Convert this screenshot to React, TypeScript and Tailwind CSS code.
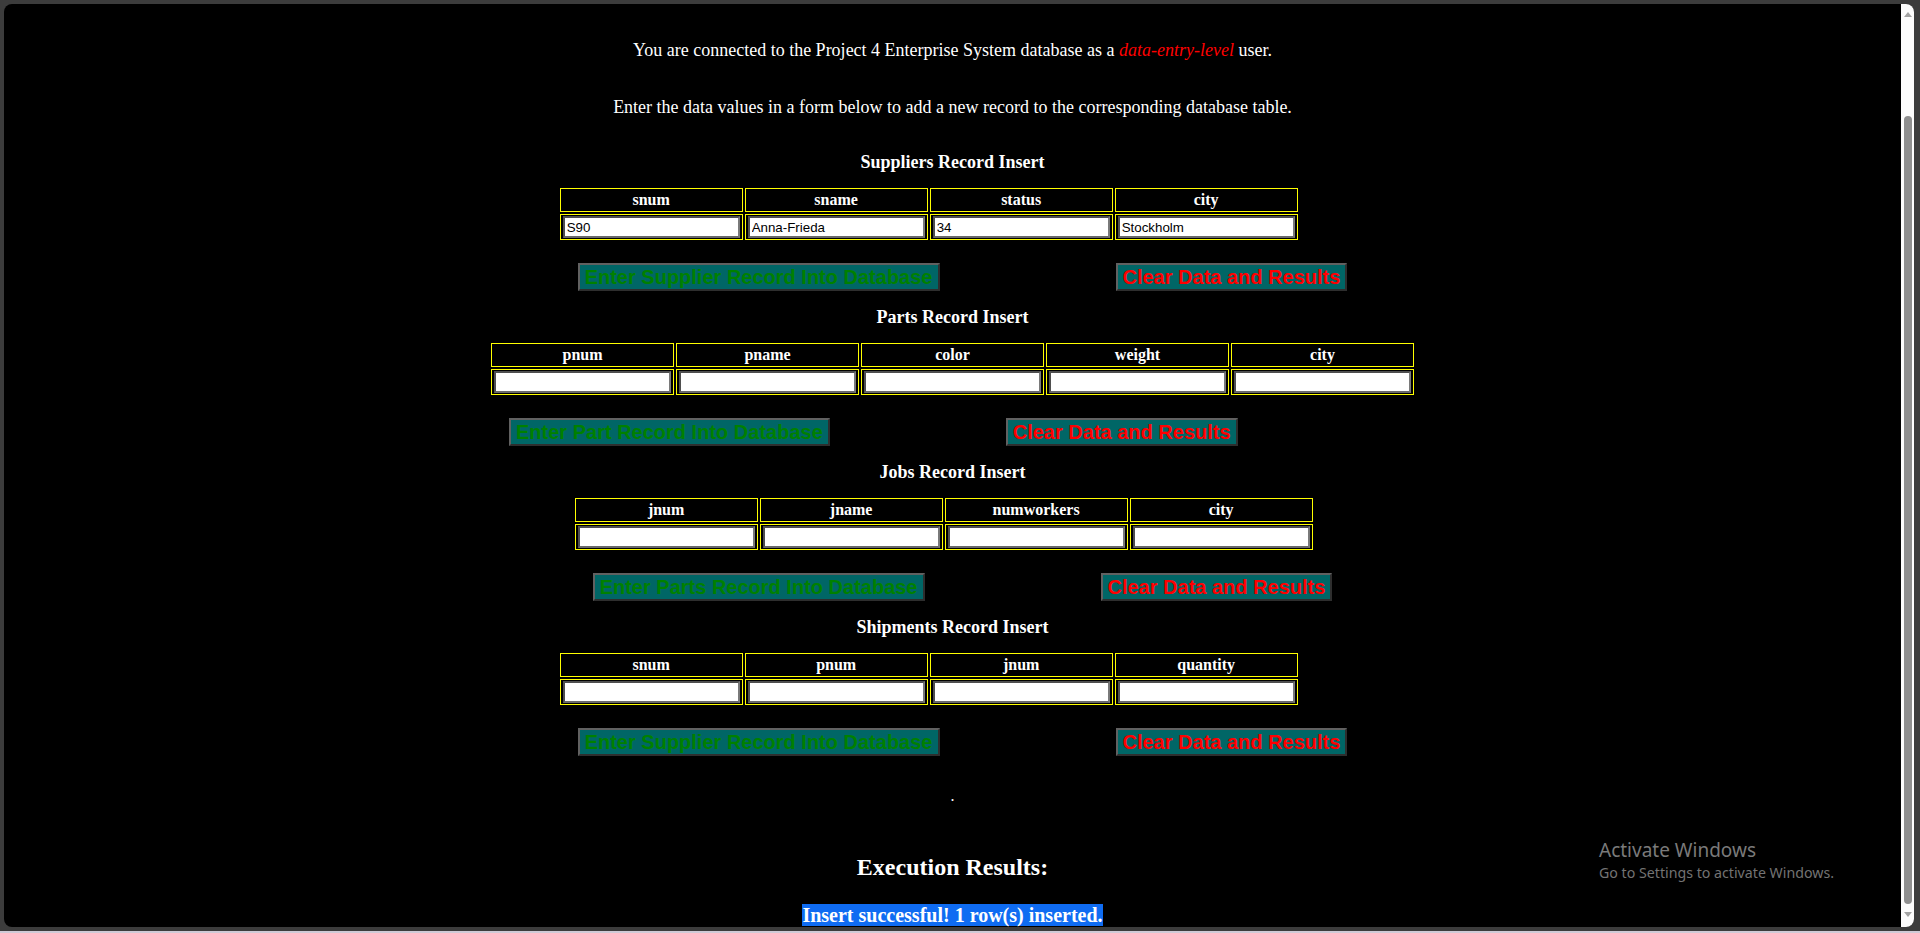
// ─── Form definitions ─────────────────────────────────────────────────────────
interface RecordFormDef {
  title: string;
  cols: string[];
  values?: string[];
  grid: string;
  submit: string;
}

const FORMS: RecordFormDef[] = [
  {
    title: "Suppliers Record Insert",
    cols: ["snum", "sname", "status", "city"],
    values: ["S90", "Anna-Frieda", "34", "Stockholm"],
    grid: "grid-cols-[repeat(4,183px)]",
    submit: "Enter Supplier Record Into Database",
  },
  {
    title: "Parts Record Insert",
    cols: ["pnum", "pname", "color", "weight", "city"],
    grid: "grid-cols-[repeat(5,183px)]",
    submit: "Enter Part Record Into Database",
  },
  {
    title: "Jobs Record Insert",
    cols: ["jnum", "jname", "numworkers", "city"],
    grid: "grid-cols-[repeat(4,183px)]",
    submit: "Enter Parts Record Into Database",
  },
  {
    title: "Shipments Record Insert",
    cols: ["snum", "pnum", "jnum", "quantity"],
    grid: "grid-cols-[repeat(4,183px)]",
    submit: "Enter Supplier Record Into Database",
  },
];

const BUTTON =
  "h-[28px] whitespace-nowrap border-2 border-t-[#616161] border-l-[#616161] border-r-[#2e2e2e] border-b-[#2e2e2e] bg-[#006666] px-[5px] text-[20px] leading-[24px] font-bold font-['Liberation_Sans',Arial,sans-serif]";

// ─── One insert form ──────────────────────────────────────────────────────────
function RecordForm({ form, first }: { form: RecordFormDef; first: boolean }) {
  return (
    <section className={first ? "mt-[34px] flex flex-col items-center" : "mt-[16px] flex flex-col items-center"}>
      <h3 className="text-[18px] leading-[21px] font-bold text-white">{form.title}</h3>
      <div className="mt-[13px] flex flex-col items-start">
        <div className={`grid ${form.grid} gap-[2px] p-[2px]`}>
          {form.cols.map((c) => (
            <div
              key={`h-${c}`}
              className="h-[24px] border border-[#ffff00] flex items-center justify-center text-[16px] font-bold text-white"
            >
              {c}
            </div>
          ))}
          {form.cols.map((c, i) => (
            <div key={`v-${c}`} className="h-[26px] border border-[#ffff00] px-[2px] py-[1px]">
              <input
                type="text"
                defaultValue={form.values?.[i] ?? ""}
                className="block w-[177px] h-[22px] border-2 border-t-[#4f4f4f] border-l-[#4f4f4f] border-r-[#7a7a7a] border-b-[#6a6a6a] bg-white px-[2px] text-[13.33px] text-black outline-none font-['Liberation_Sans',Arial,sans-serif]"
              />
            </div>
          ))}
        </div>
        <div className="mt-[21px] ml-[20px] flex gap-[176px]">
          <button type="button" className={`${BUTTON} text-[#008000]`}>
            {form.submit}
          </button>
          <button type="button" className={`${BUTTON} text-[#ff0000]`}>
            Clear Data and Results
          </button>
        </div>
      </div>
    </section>
  );
}

// ─── Browser chrome bits ──────────────────────────────────────────────────────
function Scrollbar() {
  return (
    <div className="w-[13px] shrink-0 bg-[#fcfcfc] flex flex-col items-center">
      <svg className="mt-[8px]" width="8" height="5" viewBox="0 0 8 5">
        <path d="M0 5 L4 0 L8 5 Z" fill="#a3a3a3" />
      </svg>
      <div className="mt-[99px] h-[788px] w-[8px] rounded-full bg-[#8f8f8f]" />
      <svg className="mt-[8px]" width="8" height="5" viewBox="0 0 8 5">
        <path d="M0 0 L8 0 L4 5 Z" fill="#a3a3a3" />
      </svg>
    </div>
  );
}

function ActivateWindows() {
  return (
    <div className="absolute left-[1599px] top-[837px] font-['Noto_Sans','Open_Sans',sans-serif] pointer-events-none">
      <p className="text-[19px] leading-[26px] text-[#7a7a7a]">Activate Windows</p>
      <p className="text-[14.2px] leading-[20px] text-[#737373]">Go to Settings to activate Windows.</p>
    </div>
  );
}

// ─── Root ─────────────────────────────────────────────────────────────────────
export default function App() {
  return (
    <div className="relative w-[1920px] h-[933px] overflow-hidden bg-[#3c3c3c] font-['Liberation_Serif','Times_New_Roman',serif]">
      <div className="flex h-[927px] pt-[4px] pl-[4px] pr-[6px]">
        <div className="flex flex-1 overflow-hidden rounded-[8px] bg-black">
          <main className="flex-1 flex flex-col items-center text-white">
            <p className="mt-[36px] text-[18px] leading-[21px]">
              You are connected to the Project 4 Enterprise System database as a{" "}
              <span className="italic text-[#ff0000]">data-entry-level</span> user.
            </p>
            <p className="mt-[36px] text-[18px] leading-[21px]">
              Enter the data values in a form below to add a new record to the corresponding database table.
            </p>

            {FORMS.map((f, i) => (
              <RecordForm key={f.title + i} form={f} first={i === 0} />
            ))}

            <p className="mt-[31px] text-[16px] leading-[18px]">.</p>

            <h2 className="mt-[48px] text-[24px] leading-[28px] font-bold">Execution Results:</h2>
            <p className="mt-[23px] text-[20px] leading-[23px] font-bold">
              <span className="bg-[#0f6cf2]">Insert successful! 1 row(s) inserted.</span>
            </p>
          </main>
          <Scrollbar />
        </div>
      </div>
      <div className="mt-[4px] h-[2px] bg-[#cfcad6]" />
      <ActivateWindows />
    </div>
  );
}
